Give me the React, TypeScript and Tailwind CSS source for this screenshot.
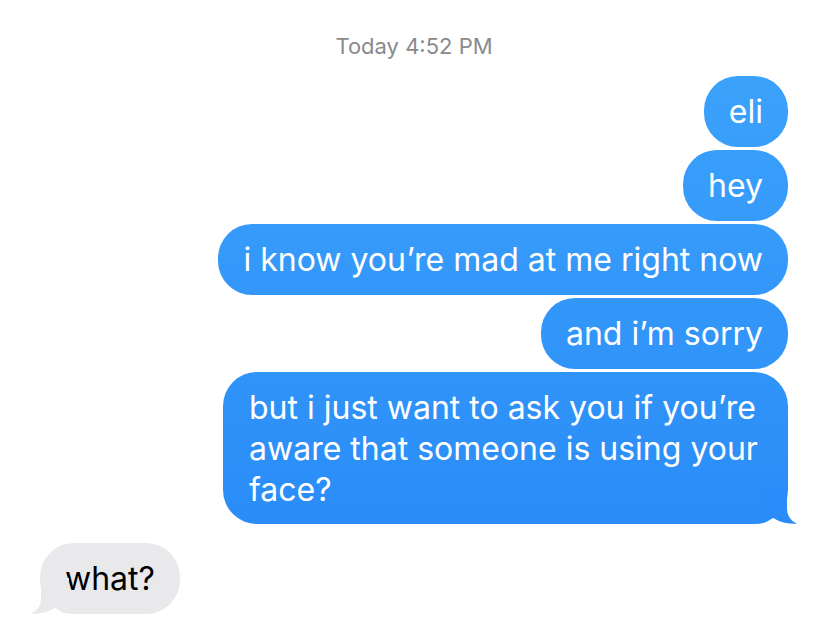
const FONT = { fontFamily: 'Inter, "Liberation Sans", sans-serif' };

const SentTail = () => (
  <svg
    className="absolute right-[-10px] bottom-0"
    width="41"
    height="36"
    viewBox="0 0 41 36"
  >
    <path
      d="M30 0 L30 20 C30 28 34 33 40 35.5 C32 36.5 21 34 15 29 C12 32 8 35.5 2 35.5 L2 0 Z"
      fill="#2a8cf8"
    />
  </svg>
);

const ReceivedTail = () => (
  <svg
    className="absolute left-[-10px] bottom-0"
    width="41"
    height="36"
    viewBox="0 0 41 36"
  >
    <path
      d="M11 0 L11 20 C11 28 7 33 1 35.5 C9 36.5 20 34 26 29 C29 32 33 35.5 39 35.5 L39 0 Z"
      fill="#e9e9eb"
    />
  </svg>
);

const Sent = ({ children }: { children: React.ReactNode }) => (
  <div className="relative flex h-[71px] items-center rounded-[34px] bg-linear-to-b from-[#3ea5fb] to-[#2787f7] bg-fixed px-[25px] text-[32px] leading-[41px] text-white">
    <span>{children}</span>
  </div>
);

export default function App() {
  return (
    <div className="min-h-[630px] w-[828px] bg-white pt-[32px]" style={FONT}>
      <div className="text-center text-[22px] leading-[28px] text-[#8a8a8e]">Today 4:52 PM</div>

      <div className="mt-[16px] flex flex-col items-end gap-[3px] pr-[40px]">
        <Sent>eli</Sent>
        <Sent>hey</Sent>
        <Sent>i know you’re mad at me right now</Sent>
        <Sent>and i’m sorry</Sent>
        <div className="relative w-[565px] rounded-[34px] bg-linear-to-b from-[#3ea5fb] to-[#2787f7] bg-fixed px-[26px] pt-[15px] pb-[14px] text-[32px] leading-[41px] text-white">
          but i just want to ask you if you’re
          <br />
          aware that someone is using your
          <br />
          face?
          <SentTail />
        </div>
      </div>

      <div className="mt-[19px] flex pl-[40px]">
        <div className="relative flex h-[71px] items-center rounded-[34px] bg-[#e9e9eb] px-[25px] text-[32px] text-black">
          what?
          <ReceivedTail />
        </div>
      </div>
    </div>
  );
}
